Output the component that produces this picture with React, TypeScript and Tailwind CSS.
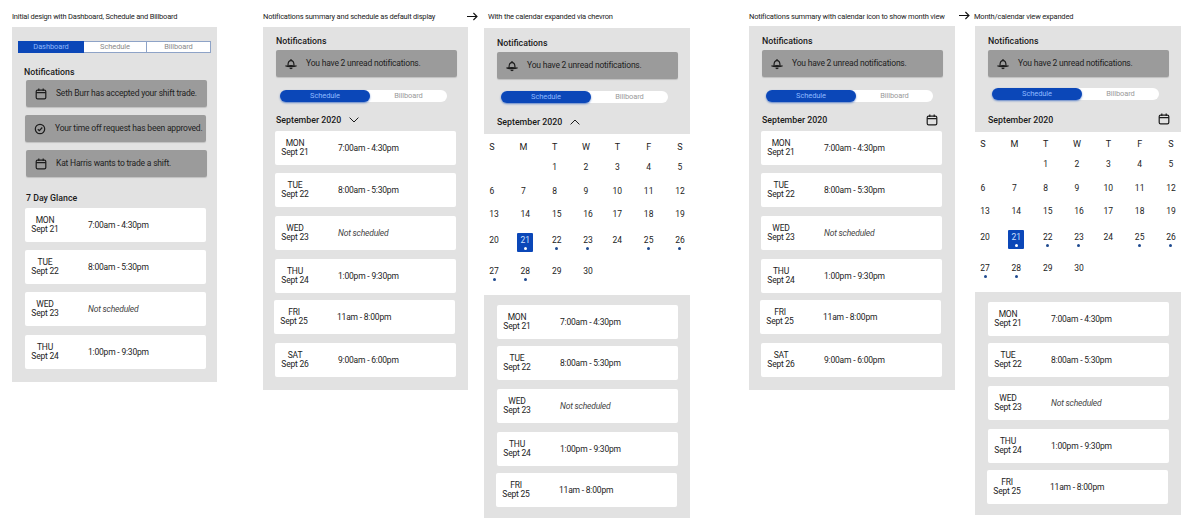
import { ReactNode } from "react";

type Shift = { day: string; date: string; time: string; off?: boolean; cls: string };

const shifts = [
  { day: "MON", date: "Sept 21", time: "7:00am - 4:30pm" },
  { day: "TUE", date: "Sept 22", time: "8:00am - 5:30pm" },
  { day: "WED", date: "Sept 23", time: "Not scheduled", off: true },
  { day: "THU", date: "Sept 24", time: "1:00pm - 9:30pm" },
  { day: "FRI", date: "Sept 25", time: "11am - 8:00pm" },
  { day: "SAT", date: "Sept 26", time: "9:00am - 6:00pm" },
];

// gaps between the cards are not even in the mockups, so each list keeps its own
const glanceCls = ["mt-[4px]", "mt-[8px]", "mt-[8px]", "mt-[9px]"];
const weekCls = ["mt-[5px]", "mt-[8px]", "mt-[9px]", "mt-[9px]", "mt-[7px] -ml-px", "mt-[9px]"];
const monthCls = ["mt-0", "mt-[7px]", "mt-[9px]", "mt-[9px]", "mt-[7px] -ml-px"];

const withCls = (cls: string[]): Shift[] => cls.map((c, i) => ({ ...shifts[i], cls: c }));

const WEEKDAYS = ["S", "M", "T", "W", "T", "F", "S"];
const DOTS = [21, 22, 23, 25, 26, 27, 28];
const NUDGED = [13, 14, 15, 16, 20, 21, 22, 23, 27, 28, 29, 30];

function CalendarIcon({ className }: { className?: string }) {
  return (
    <svg viewBox="0 0 12 12" fill="none" stroke="#1c1c1c" strokeWidth="1.2" className={className}>
      <rect x="1.2" y="2.2" width="9.6" height="8.6" rx="1.4" />
      <path d="M1.2 4.7h9.600M3.8.6v2.400M8.200.6v2.400" />
    </svg>
  );
}

function CheckIcon() {
  return (
    <svg viewBox="0 0 12 12" fill="none" stroke="#1c1c1c" strokeWidth="1.2" className="w-[12px] h-[12px]">
      <circle cx="6" cy="6" r="4.7" />
      <path d="M3.8 6.300l1.500 1.400 3-3.200" />
    </svg>
  );
}

function BellIcon() {
  return (
    <svg viewBox="0 0 12 12" fill="none" stroke="#1c1c1c" strokeWidth="1.2" className="w-[12px] h-[12px]">
      <path d="M3 7.500c0-3 1-4.800 3-4.800s3 1.800 3 4.800" />
      <path d="M1 8c1.200-.5 8.800-.5 10 0-1.200.8-8.800.8-10 0z" />
      <path d="M6 1v1.700M4.800 9.800c.4 1 2 1 2.400 0" />
    </svg>
  );
}

function Chevron({ up }: { up?: boolean }) {
  return (
    <svg viewBox="0 0 10 6" fill="none" stroke="#1c1c1c" strokeWidth="1" className="w-[10px] h-[6px] ml-[8px]">
      <path d={up ? "M.6 5.400L5 1l4.400 4.400" : "M.6.6L5 5l4.400-4.400"} />
    </svg>
  );
}

function Label({ className, children }: { className: string; children: ReactNode }) {
  return <div className={`absolute text-[7.5px] tracking-[-0.2px] leading-[10px] whitespace-nowrap text-[#222] ${className}`}>{children}</div>;
}

function Arrow({ className }: { className: string }) {
  return (
    <svg viewBox="0 0 11 9" fill="none" stroke="#111" strokeWidth="1.1" className={`absolute w-[11px] h-[9px] ${className}`}>
      <path d="M0 4.500h10M6.400 1l3.600 3.500L6.400 8" />
    </svg>
  );
}

function Title({ className, children }: { className: string; children: ReactNode }) {
  return <div className={`text-[8.8px] leading-[12px] font-medium text-[#1a1a1a] whitespace-nowrap ${className}`}>{children}</div>;
}

function Alert({ icon, text, className }: { icon: ReactNode; text: string; className: string }) {
  return (
    <div className={`w-[181px] h-[27px] bg-[#9b9b9b] rounded-[2px] shadow-[0_1px_1px_rgba(0,0,0,0.15)] flex items-center text-[8.5px] tracking-[-0.2px] text-[#222] whitespace-nowrap ${className}`}>
      <div className="w-[30px] shrink-0 flex justify-center">{icon}</div>
      <span>{text}</span>
    </div>
  );
}

function ShiftCard({ shift }: { shift: Shift }) {
  return (
    <div className={`w-[181px] h-[34px] bg-white rounded-[2px] flex items-center text-[#1c1c1c] text-[8.5px] tracking-[-0.2px] ${shift.cls}`}>
      <div className="w-[40px] text-center leading-[9.500px] shrink-0">
        {shift.day}
        <br />
        {shift.date}
      </div>
      <div className={`ml-[23px] whitespace-nowrap ${shift.off ? "italic text-[#444]" : ""}`}>{shift.time}</div>
    </div>
  );
}

// top half shared by the four later mockups
function SummaryHead({ toggleMt, headCls, control }: { toggleMt: string; headCls: string; control: ReactNode }) {
  return (
    <>
      <Title className="">Notifications</Title>
      <Alert className="mt-[3px]" icon={<BellIcon />} text="You have 2 unread notifications." />
      <div className={`relative ml-[4px] w-[167px] h-[12px] rounded-full bg-white flex items-center text-[7.5px] tracking-[-0.1px] ${toggleMt}`}>
        <div className="w-[90px] h-[12px] rounded-full bg-[#0b47b8] shadow-[0_1px_2px_rgba(11,71,184,0.6)] text-[#8db8ff] flex items-center justify-center">Schedule</div>
        <div className="flex-1 text-center text-[#9a9a9a]">Billboard</div>
      </div>
      <div className={`flex items-center ${headCls}`}>
        <Title className="">September 2020</Title>
        {control}
      </div>
    </>
  );
}

function MonthGrid({ pad }: { pad: string }) {
  const days: (number | null)[] = [null, null, ...Array.from({ length: 30 }, (_, i) => i + 1)];
  return (
    <div className={`grid grid-cols-[repeat(7,16px)] justify-between grid-rows-[20px_24px_23px_26px_31px_29px] w-[204px] text-[8.5px] leading-[10px] text-[#1c1c1c] text-center ${pad}`}>
      {WEEKDAYS.map((d, i) => (
        <div key={i} className="text-[9px]">{d}</div>
      ))}
      {days.map((d, i) => (
        <div key={i} className={`flex flex-col items-center ${d && NUDGED.includes(d) ? "translate-x-[2px]" : ""}`}>
          {d === 21 ? (
            <div className="w-[16px] h-[19px] -mt-[2px] pt-[2px] bg-[#0b47b8] rounded-[1px] text-[#cfe0ff] flex flex-col items-center">
              {d}
              <span className="w-[3px] h-[3px] mt-[2px] rounded-full bg-white" />
            </div>
          ) : (
            <>
              {d}
              {d && DOTS.includes(d) ? <span className="w-[3px] h-[3px] mt-[2px] rounded-full bg-[#1f4a8f]" /> : null}
            </>
          )}
        </div>
      ))}
    </div>
  );
}

export default function App() {
  return (
    <div className="relative w-[1195px] h-[530px] overflow-hidden bg-white font-['Roboto',sans-serif]">
      <Label className="left-[12px] top-[12px]">Initial design with Dashboard, Schedule and Billboard</Label>
      <Label className="left-[263px] top-[12px]">Notifications summary and schedule as default display</Label>
      <Arrow className="left-[467px] top-[12px]" />
      <Label className="left-[488px] top-[12px]">With the calendar expanded via chevron</Label>
      <Label className="left-[749px] top-[12px]">Notifications summary with calendar icon to show month view</Label>
      <Arrow className="left-[959px] top-[11px]" />
      <Label className="left-[974px] top-[12px]">Month/calendar view expanded</Label>

      {/* mockup 1 */}
      <div className="absolute left-[12px] top-[27px] w-[205px] h-[355px] bg-[#e2e2e2] pt-[14px]">
        <div className="ml-[6px] w-[193px] h-[12px] flex text-[7.5px] tracking-[-0.1px] border border-[#8ea3c7] bg-white text-[#8a8a8a]">
          <div className="w-[66px] -m-px h-[12px] bg-[#0b47b8] text-[#8db8ff] flex items-center justify-center">Dashboard</div>
          <div className="w-[63px] ml-px flex items-center justify-center border-r border-[#8ea3c7]">Schedule</div>
          <div className="flex-1 flex items-center justify-center">Billboard</div>
        </div>
        <Title className="ml-[12px] mt-[13px]">Notifications</Title>
        <Alert className="ml-[14px] mt-[2px]" icon={<CalendarIcon className="w-[12px] h-[12px]" />} text="Seth Burr has accepted your shift trade." />
        <Alert className="ml-[13px] mt-[8px]" icon={<CheckIcon />} text="Your time off request has been approved." />
        <Alert className="ml-[14px] mt-[8px]" icon={<CalendarIcon className="w-[12px] h-[12px]" />} text="Kat Harris wants to trade a shift." />
        <Title className="ml-[14px] mt-[15px]">7 Day Glance</Title>
        <div className="ml-[13px]">
          {withCls(glanceCls).map((s) => (
            <ShiftCard key={s.day} shift={s} />
          ))}
        </div>
      </div>

      {/* mockup 2 */}
      <div className="absolute left-[263px] top-[27px] w-[205px] h-[363px] bg-[#e2e2e2] pt-[8px] pl-[13px]">
        <SummaryHead toggleMt="mt-[13px]" headCls="mt-[12px]" control={<Chevron />} />
        <div className="-ml-px">
          {withCls(weekCls).map((s) => (
            <ShiftCard key={s.day} shift={s} />
          ))}
        </div>
      </div>

      {/* mockup 3 */}
      <div className="absolute left-[484px] top-[28px] w-[206px]">
        <div className="h-[106px] bg-[#e2e2e2] pt-[9px] pl-[13px]">
          <SummaryHead toggleMt="mt-[12px]" headCls="mt-[13px]" control={<Chevron up />} />
        </div>
        <MonthGrid pad="pt-[8px]" />
        <div className="h-[223px] bg-[#e2e2e2] pt-[10px] pl-[13px]">
          {withCls(monthCls).map((s) => (
            <ShiftCard key={s.day} shift={s} />
          ))}
        </div>
      </div>

      {/* mockup 4 */}
      <div className="absolute left-[749px] top-[26px] w-[206px] h-[364px] bg-[#e2e2e2] pt-[9px] pl-[13px]">
        <SummaryHead
          toggleMt="mt-[13px]"
          headCls="mt-[12px] w-[176px]"
          control={<CalendarIcon className="w-[12px] h-[12px] ml-auto" />}
        />
        <div className="-ml-px">
          {withCls(weekCls).map((s) => (
            <ShiftCard key={s.day} shift={s} />
          ))}
        </div>
      </div>

      {/* mockup 5 */}
      <div className="absolute left-[975px] top-[26px] w-[206px]">
        <div className="h-[106px] bg-[#e2e2e2] pt-[9px] pl-[13px]">
          <SummaryHead
            toggleMt="mt-[11px]"
            headCls="mt-[14px] w-[182px]"
            control={<CalendarIcon className="w-[12px] h-[12px] ml-auto -mt-[3px]" />}
          />
        </div>
        <MonthGrid pad="pt-[7px]" />
        <div className="h-[223px] bg-[#e2e2e2] pt-[10px] pl-[13px]">
          {withCls(monthCls).map((s) => (
            <ShiftCard key={s.day} shift={s} />
          ))}
        </div>
      </div>
    </div>
  );
}
